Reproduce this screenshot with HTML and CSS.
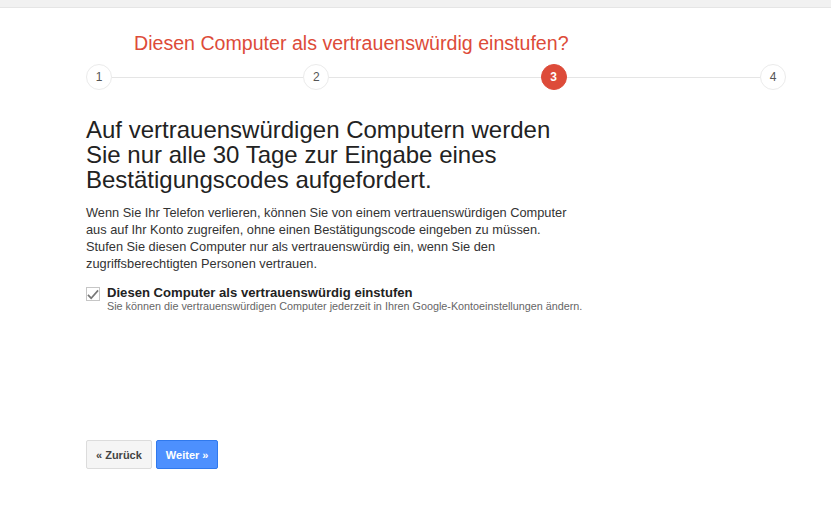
FILE: index.html
```html
<!DOCTYPE html>
<html lang="de">
<head>
  <meta charset="UTF-8" />
  <title>Bestätigung in zwei Schritten</title>
  <link rel="stylesheet" href="styles.css">
</head>
<body>

  <!-- top bar -->
  <div class="topbar"></div>

  <main class="wizard">
    <h1 class="step-title">Diesen Computer als vertrauenswürdig einstufen?</h1>

    <div class="steps">
      <div class="step">1</div>
      <div class="step-line"></div>
      <div class="step">2</div>
      <div class="step-line"></div>
      <div class="step active">3</div>
      <div class="step-line"></div>
      <div class="step">4</div>
    </div>

    <h2 class="lead">Auf vertrauenswürdigen Computern werden<br>Sie nur alle 30 Tage zur Eingabe eines<br>Bestätigungscodes aufgefordert.</h2>

    <p class="info">Wenn Sie Ihr Telefon verlieren, können Sie von einem vertrauenswürdigen Computer aus auf Ihr Konto zugreifen, ohne einen Bestätigungscode eingeben zu müssen. Stufen Sie diesen Computer nur als vertrauenswürdig ein, wenn Sie den zugriffsberechtigten Personen vertrauen.</p>

    <label class="trust">
      <span class="checkbox">
        <svg width="13" height="11" viewBox="0 0 13 11"><path d="M1 6 L4.5 9.5 L12 1" fill="none" stroke="#777" stroke-width="1.8"/></svg>
      </span>
      <span class="trust-text">
        <strong>Diesen Computer als vertrauenswürdig einstufen</strong>
        <small>Sie können die vertrauenswürdigen Computer jederzeit in Ihren Google-Kontoeinstellungen ändern.</small>
      </span>
    </label>

    <div class="actions">
      <button class="btn">« Zurück</button>
      <button class="btn btn-blue">Weiter »</button>
    </div>
  </main>

</body>
</html>
```

FILE: styles.css
```css
* {
  margin: 0;
  padding: 0;
  box-sizing: border-box;
  font-family: Arial, "Liberation Sans", sans-serif;
}

body {
  background-color: #fff;
  color: #222;
}

.topbar {
  height: 8px;
  background-color: #f1f1f1;
  border-bottom: 1px solid #e5e5e5;
}

.wizard {
  width: 700px;
  margin-left: 86px;
}

.step-title {
  font-size: 19.6px;
  font-weight: normal;
  color: #dd4b39;
  padding-left: 48px;
  margin-top: 23px;
  line-height: 24px;
}

.steps {
  display: grid;
  grid-template-columns: 26px 191fr 26px 211fr 26px 193fr 26px;
  align-items: center;
  margin-top: 9px;
}

.step {
  width: 26px;
  height: 26px;
  border-radius: 50%;
  border: 1px solid #ebebeb;
  background-color: #fff;
  display: flex;
  align-items: center;
  justify-content: center;
  font-size: 12px;
  color: #555;
}

.step.active {
  background-color: #dd4b39;
  border-color: #dd4b39;
  color: #fff;
  font-weight: bold;
}

.step-line {
  height: 1px;
  background-color: #e5e5e5;
}

.lead {
  font-size: 24px;
  font-weight: normal;
  line-height: 25px;
  color: #222;
  margin-top: 27px;
}

.info {
  font-size: 12.8px;
  line-height: 17px;
  color: #333;
  width: 490px;
  margin-top: 12px;
}

.trust {
  display: flex;
  gap: 7px;
  margin-top: 13px;
}

.checkbox {
  width: 14px;
  height: 14px;
  border: 1px solid #c6c6c6;
  margin-top: 2px;
  display: flex;
  align-items: center;
  justify-content: center;
}

.trust-text {
  display: flex;
  flex-direction: column;
}

.trust-text strong {
  font-size: 13.1px;
  line-height: 15px;
  color: #222;
}

.trust-text small {
  font-size: 10.8px;
  line-height: 13px;
  color: #666;
}

.actions {
  display: flex;
  gap: 4px;
  margin-top: 127px;
}

.btn {
  height: 29px;
  padding: 0 9px;
  font-size: 11px;
  font-weight: bold;
  color: #444;
  background-color: #f5f5f5;
  border: 1px solid #dcdcdc;
  border-radius: 2px;
}

.btn-blue {
  color: #fff;
  background-color: #4d90fe;
  border-color: #3079ed;
}
```
